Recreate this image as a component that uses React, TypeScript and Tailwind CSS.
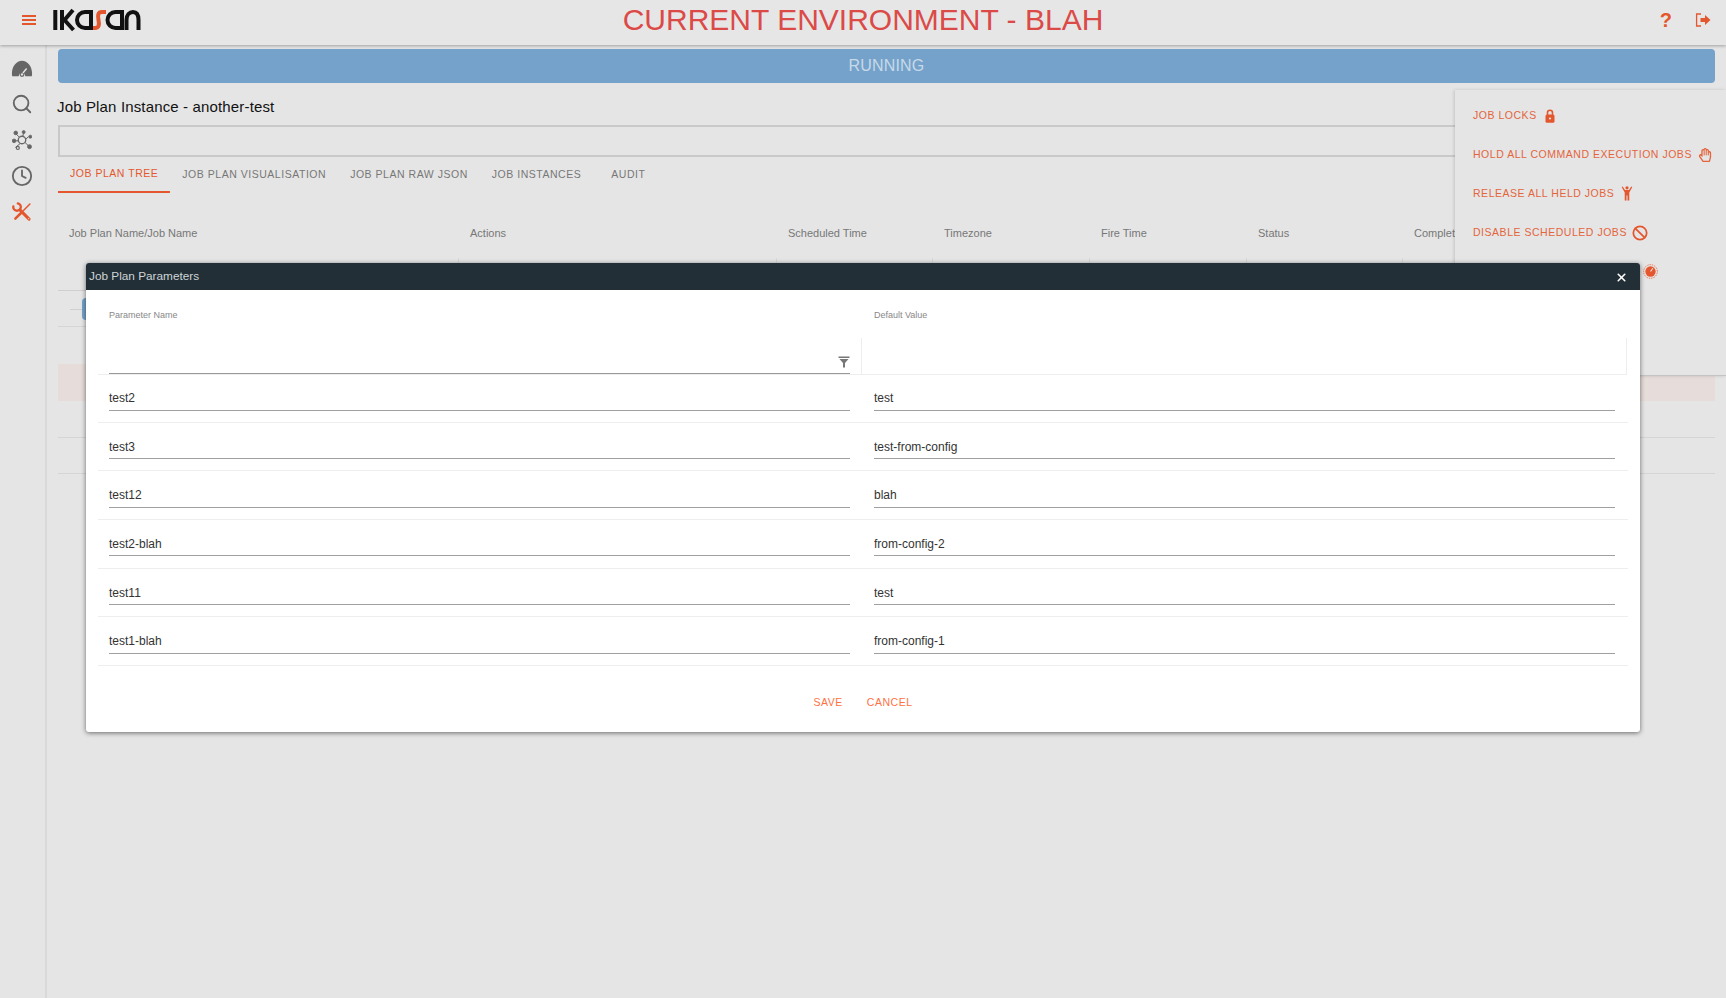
import React from 'react';
import { FaRegHandPaper } from 'react-icons/fa';
import { Ban, Clock, Search, X } from 'lucide-react';

const TABS = ['Job Plan Tree', 'Job Plan Visualisation', 'Job Plan Raw JSON', 'Job Instances', 'Audit'];
const COLUMNS = ['Job Plan Name/Job Name', 'Actions', 'Scheduled Time', 'Timezone', 'Fire Time', 'Status', 'Completed Time'];
const PARAMETERS = [
  ['test2', 'test'],
  ['test3', 'test-from-config'],
  ['test12', 'blah'],
  ['test2-blah', 'from-config-2'],
  ['test11', 'test'],
  ['test1-blah', 'from-config-1'],
];

const Logo = () => (
  <svg width="90" height="24" viewBox="52 9 90 24" fill="none" strokeWidth="4" role="img" aria-label="Ikasan">
    <g stroke="#111">
      <path d="M55.3 11V31M62 11V31M73 11L64.5 21L73.5 31" />
      <path d="M91 29H85C80.5 29 77 25.5 77 21C77 16.5 80.5 13 85 13H91V31" />
      <path d="M122 29H115.500C111 29 107.500 25.500 107.500 21C107.500 16.500 111 13 115.500 13H122V31" />
      <path d="M126.500 31V21C126.500 16 129.500 13 133 13C136.500 13 138.500 16 138.500 21V31" />
    </g>
    <path d="M106 13H102C98 13 97.500 16 98.500 21C99.500 26 99 29 95 29H93" stroke="#e4572e" />
  </svg>
);

const GaugeIcon = () => (
  <svg width="22" height="22" viewBox="0 0 24 24">
    <path d="M1 18C1 10 6 4 12 4S23 10 23 18C23 19 22.900 20 22.700 21H15.500A3.500 3.500 0 0 0 8.500 21H1.300C1.100 20 1 19 1 18Z" fill="#666" />
    <circle cx="12" cy="19" r="2" fill="none" stroke="#666" strokeWidth="1.400" />
    <path d="M13 17.500L17 12.500" stroke="#e5e5e5" strokeWidth="1.500" />
  </svg>
);

const NetworkIcon = () => (
  <svg width="20" height="22" viewBox="0 0 24 24" fill="#666" stroke="#666">
    <path d="M4 4L22 21M14 3L12 12M20 8L4 21M2 13H12" strokeWidth="1.200" />
    <circle cx="12" cy="12" r="4.500" fill="#e5e5e5" strokeWidth="1.600" />
    <circle cx="4.500" cy="3.500" r="2.200" />
    <circle cx="14" cy="2.500" r="1.800" />
    <circle cx="22" cy="8" r="1.800" />
    <circle cx="2.500" cy="13" r="2.200" />
    <circle cx="7" cy="21.500" r="1.800" fill="#e5e5e5" strokeWidth="1.400" />
    <circle cx="21" cy="20" r="2.400" />
  </svg>
);

const ToolsIcon = () => (
  <svg width="20" height="22" viewBox="0 0 24 24" fill="none" stroke="#e4572e" strokeLinecap="round">
    <path d="M1.600 5.200A4.500 4.500 0 1 0 7 1.600" strokeWidth="2.800" />
    <path d="M9.500 9.500L20.500 20.500" strokeWidth="3.600" />
    <path d="M21.500 2.500L13.500 10.500" strokeWidth="1.800" />
    <path d="M10.500 13.500L4 20" strokeWidth="3" />
    <circle cx="20" cy="20" r="0.700" fill="#e5e5e5" stroke="none" />
  </svg>
);

const LogoutIcon = () => (
  <svg width="16" height="14" viewBox="0 0 16 14">
    <path d="M6 1H1.600V13H6" fill="none" stroke="#e4572e" strokeWidth="1.300" />
    <path d="M5.500 5H10V2L15.500 7L10 12V9H5.500Z" fill="#e4572e" />
  </svg>
);

const LockIcon = () => (
  <svg width="10" height="14" viewBox="0 0 10 14">
    <path d="M2.500 6V3.500C2.500 2 3.500 1.200 5 1.200S7.500 2 7.500 3.500V6" fill="none" stroke="#e4572e" strokeWidth="1.600" />
    <rect x="0.500" y="5.500" width="9" height="8.300" rx="1.500" fill="#e4572e" />
    <circle cx="5" cy="9.500" r="1.100" fill="#e5e5e5" />
  </svg>
);

const PersonIcon = () => (
  <svg width="12" height="15" viewBox="0 0 12 15" fill="#e4572e">
    <circle cx="6" cy="1.800" r="1.600" />
    <path d="M0.700 1L1.700 0.500L4 4H8L10.300 0.500L11.300 1L8.300 6.500V14.500H6.500V9.500H5.500V14.500H3.700V6.500Z" />
  </svg>
);

const DialIcon = () => (
  <svg width="15" height="15" viewBox="0 0 16 16">
    <circle cx="8" cy="8" r="7.300" fill="none" stroke="#e4572e" strokeWidth="1" strokeDasharray="1 1" />
    <circle cx="8" cy="8" r="5.500" fill="#e4572e" />
    <path d="M8 8L10.500 4.500" stroke="#e5e5e5" strokeWidth="1.200" />
  </svg>
);

const FunnelIcon = () => (
  <svg width="12" height="12" viewBox="0 0 12 12" fill="#777">
    <path d="M0.500 0.500H11.500V2H0.500ZM1.500 3H10.500L7 7V11.500H5V7Z" />
  </svg>
);

export default function App() {
  return (
    <div className="relative h-screen w-full overflow-hidden bg-[#e5e5e5] font-['Liberation_Sans',Arial,sans-serif]">
      <header className="relative z-10 grid h-[45px] grid-cols-[1fr_auto_1fr] items-center bg-[#e6e6e6] pb-[5px] shadow-[0_1px_3px_rgba(0,0,0,0.3)]">
        <div className="flex items-center gap-[16px] pl-[22px]">
          <div className="flex w-[14px] flex-col gap-[1.500px]">
            <div className="h-[2.500px] bg-[#e4572e]" />
            <div className="h-[2.500px] bg-[#e4572e]" />
            <div className="h-[2.500px] bg-[#e4572e]" />
          </div>
          <Logo />
        </div>
        <h1 className="text-[30px] leading-none text-[#dc4a48]">CURRENT ENVIRONMENT - BLAH</h1>
        <div className="flex items-center justify-end gap-[23px] pr-[15px]">
          <span className="text-[20px] font-bold leading-none text-[#e4572e]">?</span>
          <LogoutIcon />
        </div>
      </header>

      <div className="flex h-[953px]">
        <aside className="flex w-[47px] shrink-0 flex-col items-center gap-[14px] border-r-2 border-[#d9d9d9] pt-[12px] pr-[1px] text-[#666]">
          <GaugeIcon />
          <Search size={22} strokeWidth={2} />
          <NetworkIcon />
          <Clock size={22} strokeWidth={2} />
          <ToolsIcon />
        </aside>

        <main className="min-w-0 flex-1 pl-[11px] pr-[11px] pt-[4px]">
          <div className="flex h-[34px] items-center justify-center rounded-[4px] bg-[#74a2ca] text-[16px] tracking-[0.01em] text-[#c8d9e8]">
            RUNNING
          </div>
          <h2 className="-ml-[1px] mt-[14px] h-[20px] text-[15px] leading-[20px] tracking-[0.01em] text-[#111]">
            Job Plan Instance - another-test
          </h2>
          <div className="mt-[8px] h-[32px] border-2 border-[#c9c9c9]" />

          <nav className="flex h-[36px] items-stretch">
            {TABS.map((tab, i) => (
              <div
                key={tab}
                className={`flex items-center px-[12px] text-[10.500px] uppercase tracking-[0.05em] ${
                  i === 0 ? 'border-b-2 border-[#e4572e] text-[#e4572e]' : 'text-[#777]'
                } ${i === 4 ? 'ml-[6px]' : ''}`}
              >
                {tab}
              </div>
            ))}
          </nav>

          <div className="mt-[28px] grid h-[25px] grid-cols-[401px_318px_156px_157px_157px_156px_1fr] text-[11px] leading-[25px] text-[#777]">
            {COLUMNS.map((col) => (
              <div key={col} className="pl-[11px]">{col}</div>
            ))}
          </div>
          <div className="mt-[12px] grid h-[33px] grid-cols-[401px_318px_156px_157px_157px_156px_1fr] border-b border-[#cfcfcf]">
            {COLUMNS.map((col) => (
              <div key={col} className="border-r border-[#d8d8d8]" />
            ))}
          </div>
          <div className="relative h-[36px] border-b border-[#d5d5d5]">
            <div className="absolute left-[12px] top-[18px] h-px w-[14px] bg-[#d0d0d0]" />
            <div className="absolute left-[24px] top-[7px] h-[22px] w-[8px] rounded-l-[4px] bg-[#74a2ca]" />
          </div>
          <div className="h-[37px]" />
          <div className="h-[37px] bg-[#e6dcd9]" />
          <div className="h-[37px] border-b border-[#d5d5d5]" />
          <div className="h-[36px] border-b border-[#d5d5d5]" />
        </main>
      </div>

      <section className="absolute left-[1455px] top-[90px] h-[286px] w-[271px] border-b border-[#c4c4c4] bg-[#e5e5e5] pt-[6px] shadow-[-1px_0_3px_rgba(0,0,0,0.15)]">
        <div className="flex h-[39px] items-center gap-[8px] whitespace-nowrap pl-[18px] text-[10.500px] tracking-[0.05em] text-[#e4643c]">
          JOB LOCKS <LockIcon />
        </div>
        <div className="flex h-[39px] items-center gap-[6px] whitespace-nowrap pl-[18px] text-[10.500px] tracking-[0.05em] text-[#e4643c]">
          HOLD ALL COMMAND EXECUTION JOBS <FaRegHandPaper size={14} />
        </div>
        <div className="flex h-[39px] items-center gap-[7px] whitespace-nowrap pl-[18px] text-[10.500px] tracking-[0.05em] text-[#e4643c]">
          RELEASE ALL HELD JOBS <PersonIcon />
        </div>
        <div className="flex h-[39px] items-center gap-[5px] whitespace-nowrap pl-[18px] text-[10.500px] tracking-[0.05em] text-[#e4643c]">
          DISABLE SCHEDULED JOBS <Ban size={16} strokeWidth={2.600} color="#e4572e" />
        </div>
        <div className="flex h-[39px] items-center pl-[188px]">
          <DialIcon />
        </div>
      </section>

      <section className="absolute left-[86px] top-[263px] z-20 h-[469px] w-[1554px] rounded-[3px] bg-white shadow-[0_1px_5px_rgba(0,0,0,0.55)]">
        <div className="flex h-[27px] items-center justify-between rounded-t-[3px] bg-[#222f36] pl-[3px] pr-[12px] pt-[1px] text-[11.800px] text-[#cfd4d6]">
          Job Plan Parameters
          <X size={13} strokeWidth={3} color="#fff" />
        </div>

        <div className="px-[12px]">
          <div className="grid h-[48px] grid-cols-[763px_766px] items-center pt-[4px] text-[9px] text-[#888]">
            <div className="pl-[11px]">Parameter Name</div>
            <div className="pl-[13px]">Default Value</div>
          </div>
          <div className="grid h-[36px] grid-cols-[763px_766px]">
            <div className="border-b border-[#eeeeee] px-[11px]">
              <div className="flex h-[36px] items-end justify-end border-b-[1.500px] border-[#999] pb-[5px] pr-[0px]">
                <FunnelIcon />
              </div>
            </div>
            <div className="border-x border-b border-[#eeeeee]" />
          </div>
          {PARAMETERS.map(([name, value]) => (
            <div key={name} className="grid h-[48.670px] grid-cols-[763px_766px] border-b border-[#eeeeee]">
              <div className="px-[11px] pt-[11px]">
                <div className="h-[25.500px] border-b-[1.500px] border-[#a0a0a0] text-[12px] leading-[26px] text-[#333]">{name}</div>
              </div>
              <div className="pl-[13px] pr-[12px] pt-[11px]">
                <div className="h-[25.500px] border-b-[1.500px] border-[#a0a0a0] text-[12px] leading-[26px] text-[#333]">{value}</div>
              </div>
            </div>
          ))}
        </div>

        <div className="mt-[26px] flex justify-center gap-[24px] text-[10.500px] leading-[20px] tracking-[0.05em] text-[#ff7043]">
          <span>SAVE</span>
          <span>CANCEL</span>
        </div>
      </section>
    </div>
  );
}
